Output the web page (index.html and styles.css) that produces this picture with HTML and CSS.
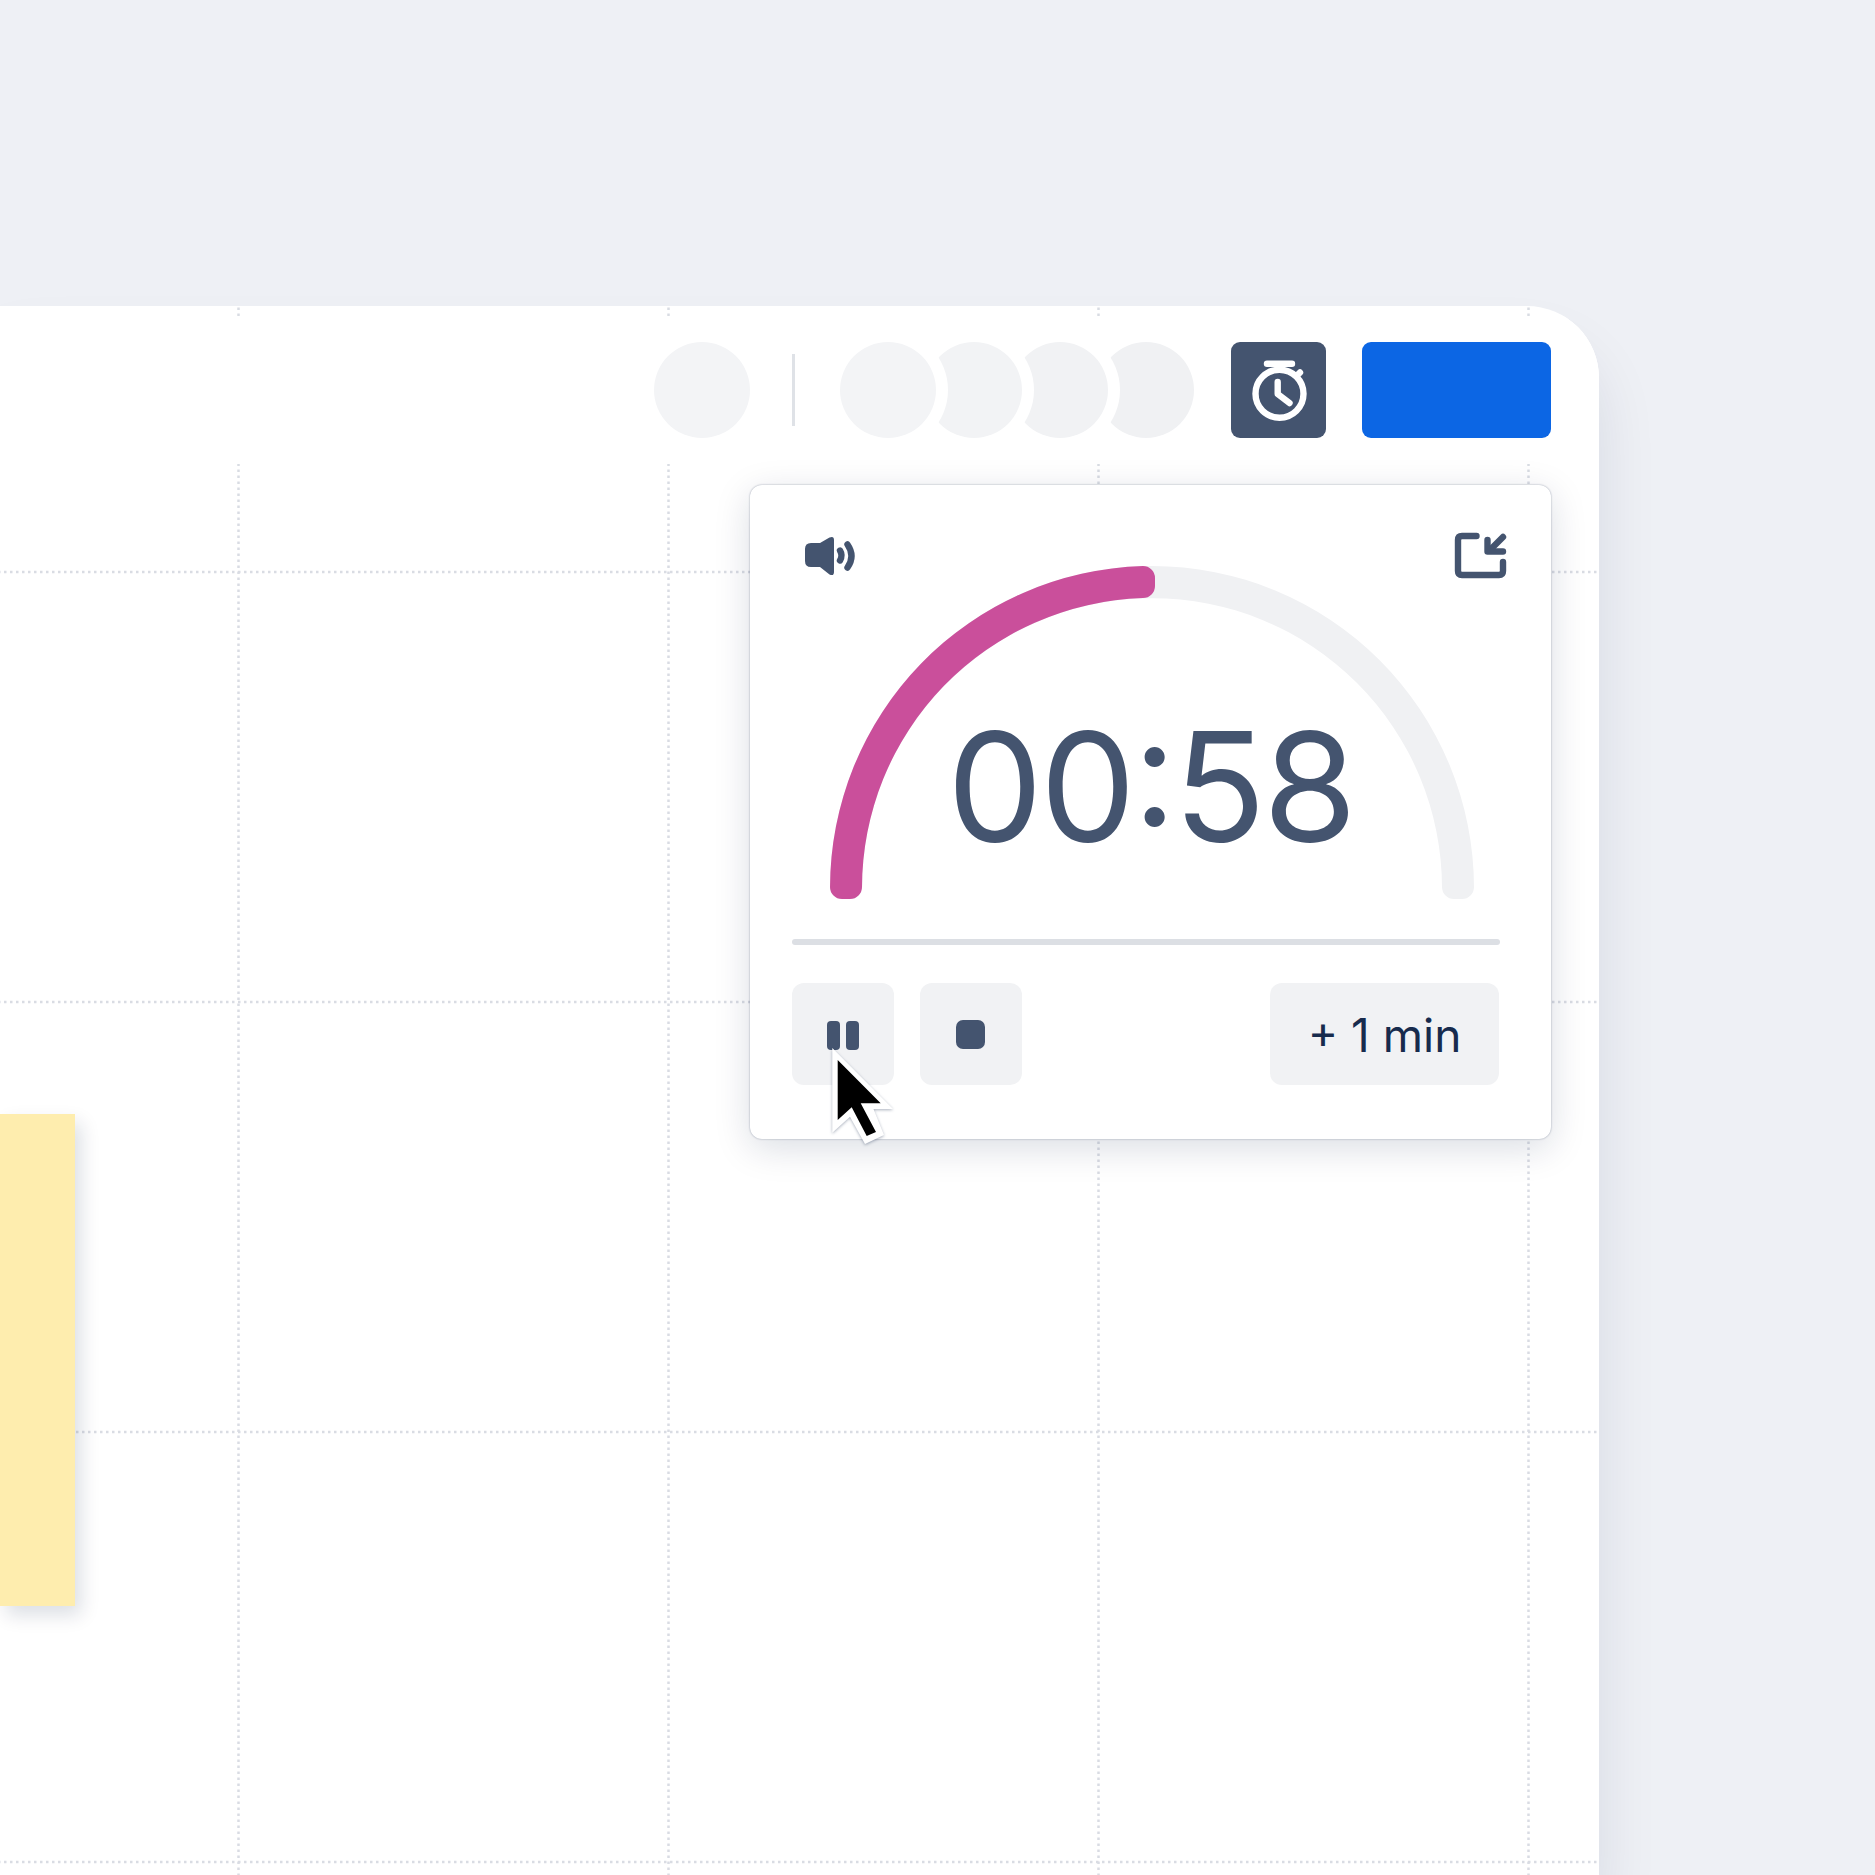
FILE: index.html
```html
<!DOCTYPE html>
<html lang="en">
<head>
<meta charset="utf-8">
<title>Timer</title>
<link rel="stylesheet" href="styles.css">
</head>
<body>
<main class="canvas">
  <svg class="grid" viewBox="0 306 1599 1569" aria-hidden="true">
    <g class="grid-v">
      <line x1="238.5" y1="306" x2="238.5" y2="1875"/>
      <line x1="668.5" y1="306" x2="668.5" y2="1875"/>
      <line x1="1098.5" y1="306" x2="1098.5" y2="1875"/>
      <line x1="1528.5" y1="306" x2="1528.5" y2="1875"/>
    </g>
    <g class="grid-h">
      <line x1="0" y1="572" x2="1599" y2="572"/>
      <line x1="0" y1="1002" x2="1599" y2="1002"/>
      <line x1="0" y1="1432" x2="1599" y2="1432"/>
      <line x1="0" y1="1862" x2="1599" y2="1862"/>
    </g>
  </svg>
  <div class="sticky"></div>

  <header class="toolbar">
    <span class="avatar"></span>
    <span class="toolbar-divider"></span>
    <div class="avatar-stack">
      <span class="avatar avatar-d"></span>
      <span class="avatar avatar-c"></span>
      <span class="avatar avatar-b"></span>
      <span class="avatar"></span>
    </div>
    <button class="timer-toggle" type="button" aria-label="Timer">
      <svg class="icon-full" viewBox="1231 342 96 96">
        <g class="stroke-white">
          <circle cx="1279.5" cy="393.7" r="24"/>
          <path d="M1267 363.7H1292"/>
          <path d="M1277.7 382V394L1289.5 403"/>
          <path d="M1297 375.5L1300 372.5"/>
        </g>
      </svg>
    </button>
    <button class="share" type="button" aria-label="Share"></button>
  </header>

  <section class="timer-panel">
    <div class="panel-top">
      <svg class="icon-sound" viewBox="804 536 54 40">
        <path class="fill-slate" d="M811 543H820L829.5 537.5Q834 535.5 834 540V572Q834 576.5 829.5 574.5L820 567H811Q805 567 805 561V549Q805 543 811 543Z"/>
        <g class="stroke-slate">
          <path d="M840 550.5Q843 555.5 840 560.5"/>
          <path d="M847.5 544.5Q855.5 556 847.5 567.5"/>
        </g>
      </svg>
      <svg class="icon-min" viewBox="1453 531 55 49">
        <g class="stroke-slate">
          <path d="M1476.5 536H1462Q1458 536 1458 540V571Q1458 575 1462 575H1499Q1503 575 1503 571V562"/>
          <path d="M1503 537L1490 550"/>
          <path d="M1487.5 540V551.5H1503"/>
        </g>
      </svg>
    </div>
    <div class="gauge">
      <svg class="gauge-arc" viewBox="820 556 664 350">
        <path class="arc-track" d="M830 887V888A322 322 0 0 1 1474 888V887A12 12 0 0 1 1462 899H1454A12 12 0 0 1 1442 887V888A290 290 0 0 0 862 888V887A12 12 0 0 1 850 899H842A12 12 0 0 1 830 887Z"/>
        <path class="arc-fill" d="M830 887V888A322 322 0 0 1 1143 566.1A12 12 0 0 1 1155 578V586A12 12 0 0 1 1143 598.1A290 290 0 0 0 862 888V887A12 12 0 0 1 850 899H842A12 12 0 0 1 830 887Z"/>
      </svg>
      <div class="time">00:58</div>
    </div>
    <div class="panel-divider"></div>
    <div class="controls">
      <button class="ctrl" type="button" aria-label="Pause">
        <span class="pause-bar"></span><span class="pause-bar"></span>
      </button>
      <button class="ctrl" type="button" aria-label="Stop">
        <span class="stop-square"></span>
      </button>
      <button class="ctrl ctrl-add" type="button">+ 1 min</button>
    </div>
    <svg class="cursor" viewBox="826 1042 76 110">
      <path class="cursor-outline" d="M832.3 1048L893 1109H873.5L884 1135L865 1144L850 1116.7L832.3 1132.7Z"/>
      <path class="cursor-arrow" d="M837.7 1060L880.7 1103.3H860.7L876 1132L866.7 1136L851.7 1107.3L837.7 1120Z"/>
    </svg>
  </section>
</main>
</body>
</html>
```
FILE: styles.css
```css
* { box-sizing: border-box; }
html, body { margin: 0; height: 1875px; overflow: hidden; }
body {
  background: #eef0f5;
  padding-top: 306px;
}
.canvas {
  position: relative;
  width: 1599px;
  height: 1569px;
  padding-top: 10px;
  background: #fff;
  border-top-right-radius: 72px;
  overflow: hidden;
  box-shadow: 0 42px 60px rgba(9, 30, 66, 0.1);
}
.grid { position: absolute; inset: 0; width: 100%; height: 100%; }
.grid-v line, .grid-h line { stroke: #d9dce3; stroke-width: 2.5; stroke-dasharray: 2.5 3.5; }
.grid-v line { stroke-dashoffset: -1.5; }
.grid-h line { stroke-dashoffset: -4; }
.sticky {
  position: absolute;
  left: 0;
  top: 808px;
  width: 75px;
  height: 492px;
  background: #feedae;
  box-shadow: 6px 9px 18px rgba(9, 30, 66, 0.14);
}
.toolbar {
  position: relative;
  display: flex;
  align-items: center;
  justify-content: flex-end;
  height: 148px;
  padding-right: 48px;
  background: #fff;
}
.avatar {
  display: block;
  width: 96px;
  height: 96px;
  border-radius: 50%;
  background: #f3f4f6;
}
.toolbar-divider {
  width: 3px;
  height: 72px;
  margin: 0 45px 0 42px;
  background: #dfe2e7;
}
.avatar-stack {
  display: flex;
  flex-direction: row-reverse;
  margin-right: 37px;
}
.avatar-stack .avatar { margin-left: -10px; box-shadow: 0 0 0 12px #fff; position: relative; }
.avatar-stack .avatar:last-child { margin-left: 0; }
.avatar-b { background: #f2f3f5; }
.avatar-c { background: #f1f2f4; }
.avatar-d { background: #f0f1f3; }
.timer-toggle, .share {
  display: block;
  height: 96px;
  padding: 0;
  border: 0;
  border-radius: 9px;
}
.timer-toggle { width: 95px; background: #44546f; margin-right: 36px; }
.share { width: 189px; background: #0c66e4; }
.icon-full { display: block; width: 96px; height: 96px; }
.stroke-white, .stroke-slate { fill: none; stroke-linecap: round; stroke-linejoin: round; stroke-width: 6.4; }
.stroke-white { stroke: #fff; }
.stroke-slate { stroke: #44546f; }
.fill-slate { fill: #44546f; }
.timer-panel {
  position: relative;
  width: 801px;
  height: 654px;
  margin: 21px 0 0 750px;
  padding: 46px 42px 0;
  background: #fff;
  border-radius: 12px;
  box-shadow: 0 9px 36px rgba(9, 30, 66, 0.15), 0 0 2px rgba(9, 30, 66, 0.4);
}
.panel-top {
  display: flex;
  justify-content: space-between;
  height: 49px;
  margin-left: 12px;
  margin-right: 1px;
}
.icon-sound { width: 54px; height: 40px; margin-top: 5px; }
.icon-min { width: 55px; height: 49px; }
.gauge { position: relative; margin: -24px 0 0 28px; width: 664px; height: 350px; }
.gauge-arc { display: block; width: 664px; height: 350px; }
.arc-track { fill: #f0f1f3; }
.arc-fill { fill: #ca4f9b; }
.time {
  position: absolute;
  left: -3px;
  right: 0;
  top: 136px;
  text-align: center;
  font-family: Inter, sans-serif;
  font-size: 152px;
  font-feature-settings: "case";
  letter-spacing: -3px;
  line-height: 190px;
  color: #44546f;
}
.panel-divider {
  height: 6px;
  margin: 33px 0 0;
  width: 708px;
  background: #dcdfe4;
  border-radius: 3px;
}
.controls {
  display: flex;
  gap: 25.5px;
  width: 707px;
  margin-top: 38px;
}
.ctrl {
  display: flex;
  align-items: center;
  justify-content: center;
  gap: 6px;
  width: 102px;
  height: 102px;
  padding: 0;
  border: 0;
  border-radius: 12px;
  background: #f1f2f4;
  font-family: Inter, sans-serif;
  font-size: 46px;
  color: #172b4d;
}
.ctrl-add { width: 229px; margin-left: auto; padding-top: 2px; }
.pause-bar { display: block; width: 13px; height: 29px; border-radius: 4px; background: #44546f; margin-top: 3px; }
.stop-square { display: block; width: 29px; height: 29px; border-radius: 7px; background: #44546f; }
.cursor {
  position: absolute;
  left: 76px;
  top: 557px;
  width: 76px;
  height: 110px;
  overflow: visible;
  filter: drop-shadow(0 1px 1.5px rgba(9, 30, 66, 0.35));
}
.cursor-outline { fill: #fff; }
.cursor-arrow { fill: #000; }
```
